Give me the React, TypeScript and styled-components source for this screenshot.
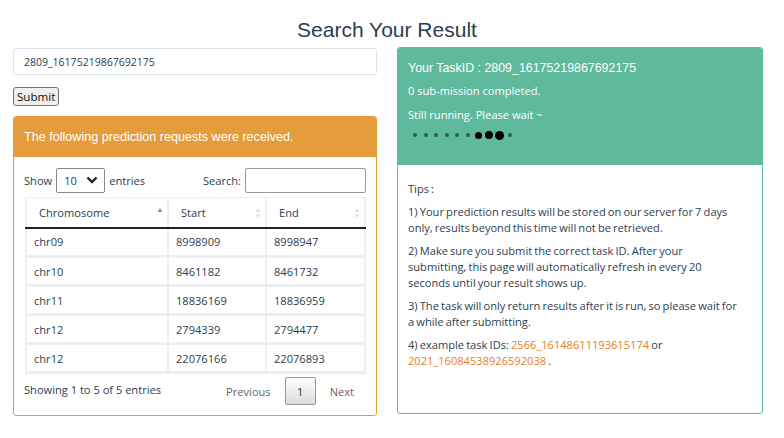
import styled, { createGlobalStyle } from "styled-components";

const GlobalStyle = createGlobalStyle`
  html, body {
    margin: 0;
    padding: 0;
    background: #ffffff;
  }
  body {
    font-family: "Open Sans", "Liberation Sans", sans-serif;
    color: #2c3e50;
  }
  * {
    box-sizing: border-box;
  }
`;

// body text size used by the Open Sans parts of the page
const TEXT = "11.1px";

type Row = { chrom: string; start: string; end: string };

const rows: Row[] = [
  { chrom: "chr09", start: "8998909", end: "8998947" },
  { chrom: "chr10", start: "8461182", end: "8461732" },
  { chrom: "chr11", start: "18836169", end: "18836959" },
  { chrom: "chr12", start: "2794339", end: "2794477" },
  { chrom: "chr12", start: "22076166", end: "22076893" },
];

// size of each dot in the loading indicator
const dots = [4, 4, 4, 4, 4, 4, 7, 8, 9, 4];

const tips = [
  "1) Your prediction results will be stored on our server for 7 days only, results beyond this time will not be retrieved.",
  "2) Make sure you submit the correct task ID. After your submitting, this page will automatically refresh in every 20 seconds until your result shows up.",
  "3) The task will only return results after it is run, so please wait for a while after submitting.",
];

const SortIcon: React.FC<{ active?: boolean }> = ({ active }) => (
  <SortSvg viewBox="0 0 6 12" width="6" height="12">
    <path d="M3 1 L5.5 5 L0.5 5 Z" fill={active ? "#7a8fd6" : "#dfe3e6"} />
    {!active && <path d="M3 11 L5.5 7 L0.5 7 Z" fill="#dfe3e6" />}
  </SortSvg>
);

export default function App() {
  return (
    <>
      <GlobalStyle />
      <Page>
        <Title>Search Your Result</Title>
        <Columns>
          <LeftCol>
            <TaskInput defaultValue="2809_16175219867692175" />
            <SubmitButton>Submit</SubmitButton>
            <Panel tone="orange">
              <PanelHeader tone="orange">
                The following prediction requests were received.
              </PanelHeader>
              <PanelBody>
                <Controls>
                  <Label>
                    Show
                    <LengthSelect>
                      <span>10</span>
                      <Chevron viewBox="0 0 12 8" width="12" height="8">
                        <path
                          d="M1.5 1.5 L6 6 L10.5 1.5"
                          stroke="#222"
                          strokeWidth="2.4"
                          fill="none"
                        />
                      </Chevron>
                    </LengthSelect>
                    entries
                  </Label>
                  <Label>
                    Search:
                    <SearchBox />
                  </Label>
                </Controls>
                <Table>
                  <thead>
                    <tr>
                      <Th style={{ width: 142 }}>
                        Chromosome
                        <SortIcon active />
                      </Th>
                      <Th style={{ width: 98 }}>
                        Start
                        <SortIcon />
                      </Th>
                      <Th>
                        End
                        <SortIcon />
                      </Th>
                    </tr>
                  </thead>
                  <tbody>
                    {rows.map((r, i) => (
                      <tr key={i}>
                        <Td>{r.chrom}</Td>
                        <Td>{r.start}</Td>
                        <Td>{r.end}</Td>
                      </tr>
                    ))}
                  </tbody>
                </Table>
                <Footer>
                  <Info>Showing 1 to 5 of 5 entries</Info>
                  <Pager>
                    <PageLink>Previous</PageLink>
                    <PageCurrent>1</PageCurrent>
                    <PageLink>Next</PageLink>
                  </Pager>
                </Footer>
              </PanelBody>
            </Panel>
          </LeftCol>
          <RightCol>
            <Panel tone="green">
              <StatusHeader>
                <StatusTitle>Your TaskID : 2809_16175219867692175</StatusTitle>
                <StatusLine gap={7}>0 sub-mission completed.</StatusLine>
                <StatusLine gap={8}>Still running. Please wait ~</StatusLine>
                <Dots>
                  {dots.map((d, i) => (
                    <Dot key={i} size={d} />
                  ))}
                </Dots>
              </StatusHeader>
              <TipsBody>
                <TipsTitle>Tips :</TipsTitle>
                {tips.map((t, i) => (
                  <Tip key={i}>{t}</Tip>
                ))}
                <Tip>
                  4) example task IDs: <TaskLink>2566_16148611193615174</TaskLink> or{" "}
                  <TaskLink>2021_16084538926592038</TaskLink> .
                </Tip>
              </TipsBody>
            </Panel>
          </RightCol>
        </Columns>
      </Page>
    </>
  );
}

const Page = styled.div`
  width: 784px;
  height: 438px;
  overflow: hidden;
  padding: 0 13px;
`;

const Title = styled.h1`
  margin: 0;
  padding-top: 17px;
  height: 47px;
  text-align: center;
  font-family: "Liberation Sans", Arial, sans-serif;
  font-weight: 400;
  font-size: 21px;
  line-height: 26px;
  color: #2c3e50;
  padding-right: 10px;
`;

const Columns = styled.div`
  display: flex;
  gap: 20px;
  align-items: flex-start;
`;

const LeftCol = styled.div`
  width: 364px;
  display: flex;
  flex-direction: column;
  align-items: flex-start;
  padding-top: 1px;
`;

const RightCol = styled.div`
  width: 366px;
`;

const TaskInput = styled.input`
  width: 364px;
  height: 27px;
  border: 1px solid #dde3ea;
  border-radius: 3px;
  padding: 0 10px;
  font-family: "Open Sans", sans-serif;
  font-size: 10.5px;
  color: #2c3e50;
  outline: none;
`;

const SubmitButton = styled.button`
  margin-top: 12px;
  height: 19px;
  padding: 0 3px;
  font-family: "Open Sans", sans-serif;
  font-size: 11.6px;
  line-height: 15px;
  color: #111;
  background: #efefef;
  border: 1px solid #767676;
  border-radius: 3px;
`;

const Panel = styled.div<{ tone: "orange" | "green" }>`
  width: 100%;
  margin-top: ${({ tone }) => (tone === "orange" ? "10px" : "0")};
  border: 1px solid ${({ tone }) => (tone === "orange" ? "#e49d3a" : "#5fb99d")};
  border-radius: 3px;
  background: #fff;
  overflow: hidden;
`;

const PanelHeader = styled.div<{ tone: "orange" | "green" }>`
  height: 40px;
  padding: 13px 10px 0;
  background: ${({ tone }) => (tone === "orange" ? "#e49d3a" : "#5fb99d")};
  color: #fff;
  font-family: "Liberation Sans", Arial, sans-serif;
  font-size: 12.6px;
`;

const PanelBody = styled.div`
  padding: 10px 10px 9px 10px;
`;

const Controls = styled.div`
  display: flex;
  justify-content: space-between;
  align-items: center;
  height: 26px;
`;

const Label = styled.label`
  display: flex;
  align-items: center;
  gap: 4px;
  font-size: ${TEXT};
  color: #2c3e50;
`;

const LengthSelect = styled.div`
  width: 49px;
  height: 25px;
  border: 1px solid #888;
  border-radius: 2px;
  display: flex;
  align-items: center;
  justify-content: space-between;
  padding: 0 6px 0 7px;
  font-size: ${TEXT};
`;

const Chevron = styled.svg`
  display: block;
`;

const SearchBox = styled.input`
  width: 121px;
  height: 25px;
  border: 1px solid #999;
  border-radius: 2px;
  outline: none;
`;

const Table = styled.table`
  margin-top: 4px;
  margin-left: 1px;
  width: 341px;
  border-collapse: collapse;
  table-layout: fixed;
  border-bottom: 2px solid #111;
`;

const Th = styled.th`
  position: relative;
  height: 30px;
  padding: 0 8px 0 12px;
  text-align: left;
  font-weight: 400;
  font-size: ${TEXT};
  color: #2c3e50;
  border: 2px solid #ecf0f1;
  border-top-width: 1px;
  border-bottom: 2px solid #222;
`;

const SortSvg = styled.svg`
  position: absolute;
  right: 4px;
  top: 9px;
`;

const Td = styled.td`
  height: 29px;
  padding: 0 7px;
  font-size: ${TEXT};
  color: #2c3e50;
  border: 2px solid #ecf0f1;
  border-bottom-width: 3px;
`;

const Footer = styled.div`
  display: flex;
  justify-content: space-between;
  align-items: center;
  margin-top: 2px;
  height: 30px;
`;

const Info = styled.div`
  font-size: ${TEXT};
  color: #2c3e50;
  margin-top: -4px;
`;

const Pager = styled.div`
  display: flex;
  align-items: center;
  gap: 14px;
  padding-right: 12px;
`;

const PageLink = styled.span`
  font-size: ${TEXT};
  color: #666;
`;

const PageCurrent = styled.span`
  width: 31px;
  height: 28px;
  display: flex;
  align-items: center;
  justify-content: center;
  font-size: ${TEXT};
  color: #333;
  border: 1px solid #979797;
  border-radius: 2px;
  background: linear-gradient(#ffffff, #dcdcdc);
`;

const StatusHeader = styled.div`
  height: 117px;
  background: #5fb99d;
  padding: 12px 10px 0;
  color: #fff;
`;

const StatusTitle = styled.div`
  font-family: "Liberation Sans", Arial, sans-serif;
  font-size: 12.4px;
  line-height: 16px;
`;

const StatusLine = styled.div<{ gap: number }>`
  font-size: ${TEXT};
  line-height: 16px;
  margin-top: ${({ gap }) => gap}px;
`;

const Dots = styled.div`
  display: flex;
  align-items: center;
  height: 14px;
  margin-top: 5px;
  padding-left: 2px;
`;

const Dot = styled.span<{ size: number }>`
  width: 10.5px;
  display: flex;
  justify-content: center;
  &::before {
    content: "";
    width: ${({ size }) => size}px;
    height: ${({ size }) => size}px;
    border-radius: 50%;
    background: ${({ size }) => (size > 5 ? "#000" : "#2f5e4f")};
  }
`;

const TipsBody = styled.div`
  padding: 16px 18.8px 44px 10px;
  font-size: ${TEXT};
  line-height: 16px;
  word-spacing: -0.75px;
  color: #2c3e50;
`;

const TipsTitle = styled.div`
  margin-bottom: 7px;
`;

const Tip = styled.p`
  margin: 0 0 7px;
  &:last-child {
    margin-bottom: 0;
  }
`;

const TaskLink = styled.a`
  color: #e67e22;
  text-decoration: none;
`;
